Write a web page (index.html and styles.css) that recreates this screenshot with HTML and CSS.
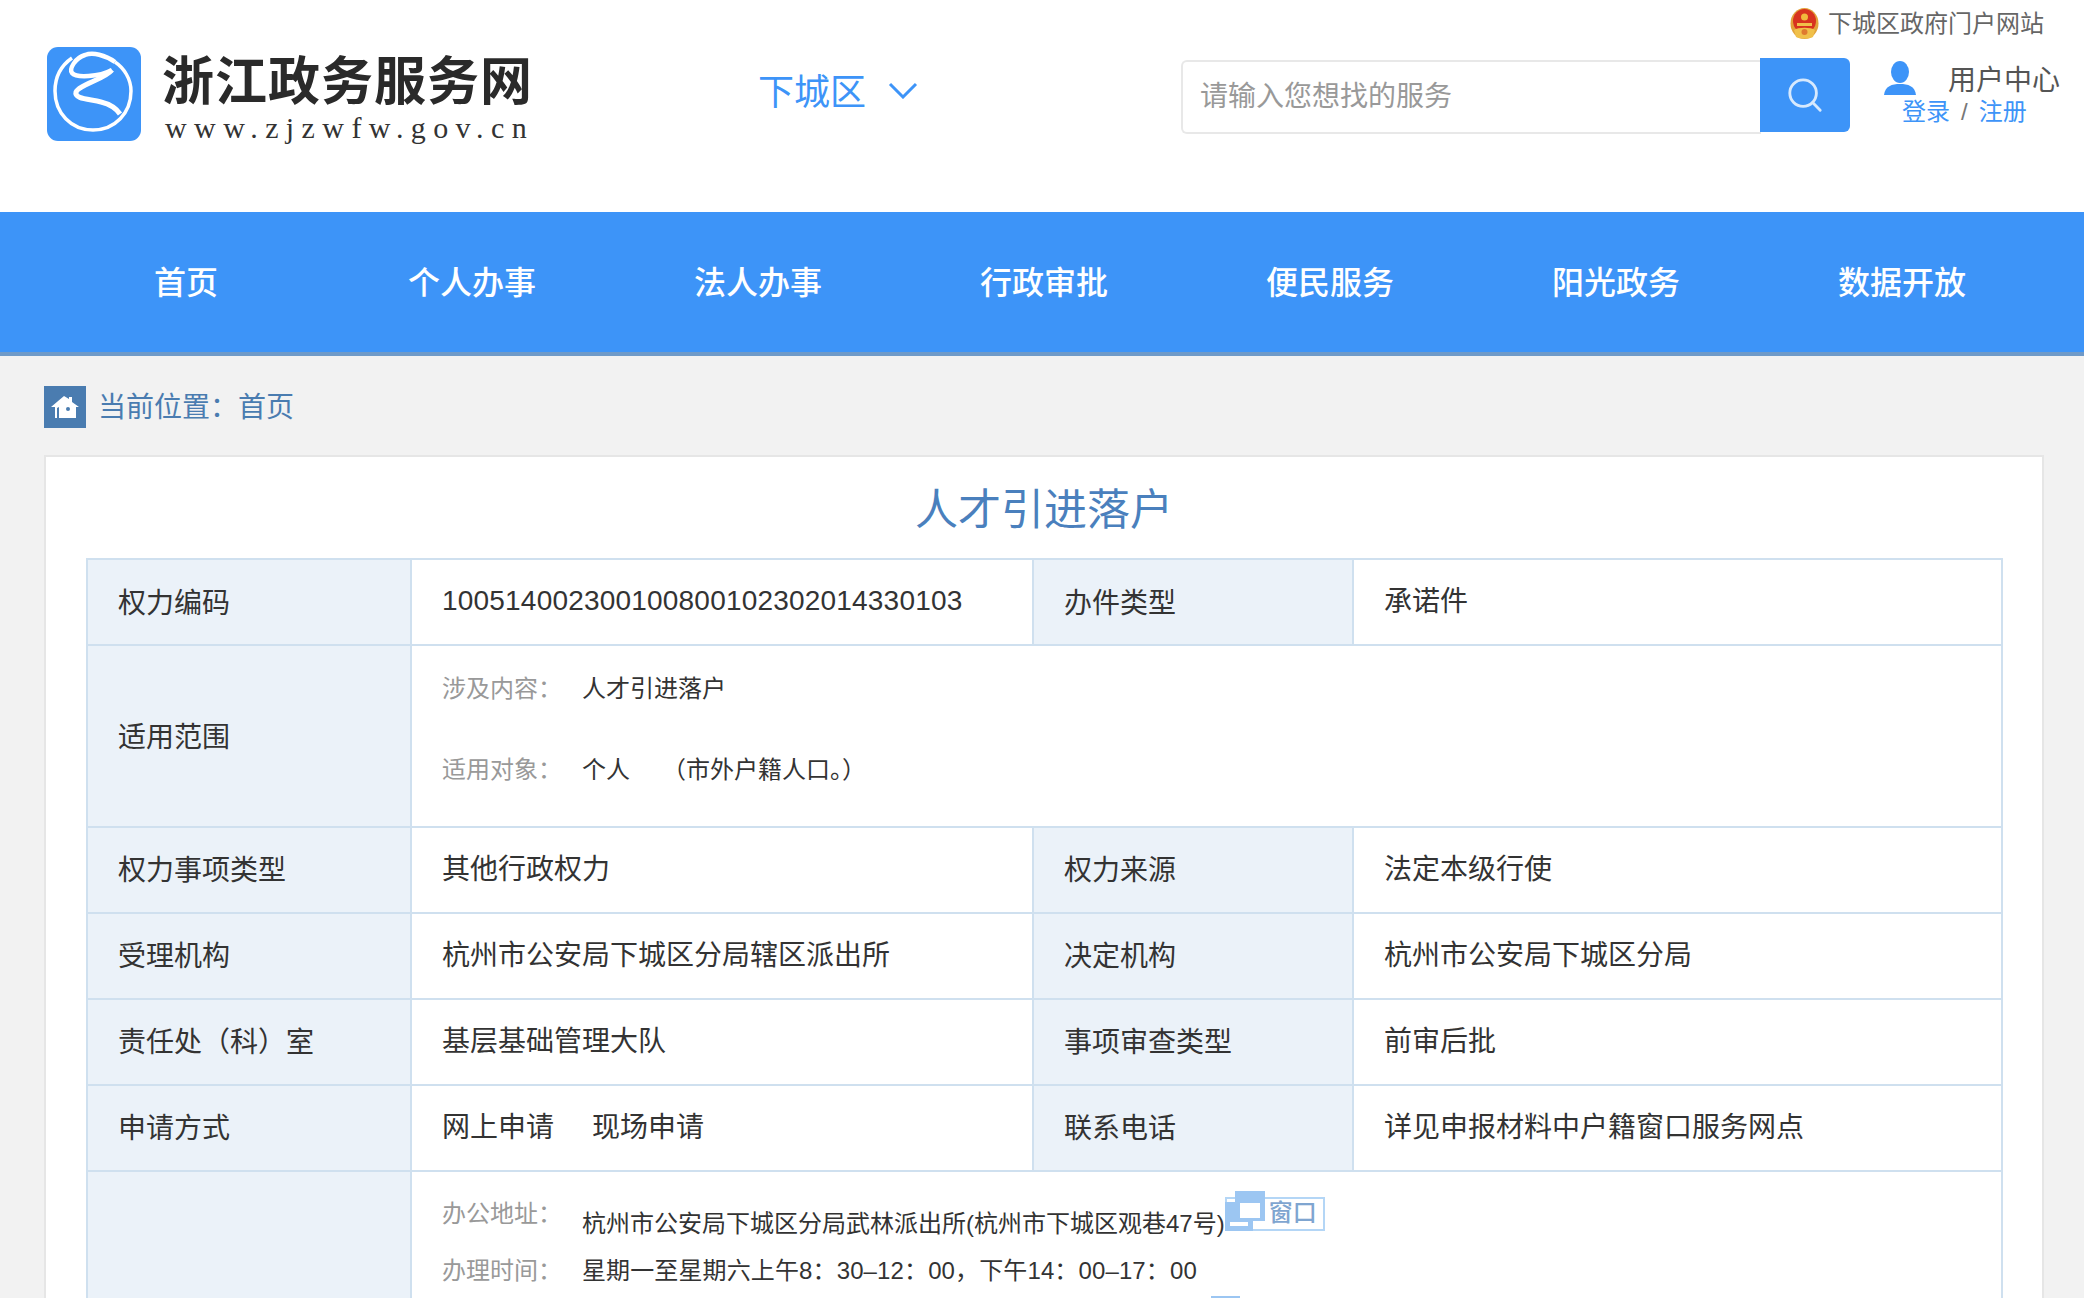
FILE: index.html
```html
<!DOCTYPE html>
<html lang="zh-CN">
<head>
<meta charset="utf-8">
<title>人才引进落户</title>
<link rel="stylesheet" href="styles.css">
</head>
<body>
<header class="header">
  <a class="logo">
    <svg class="logo-mark" viewBox="0 0 94 94">
      <rect width="94" height="94" rx="11" fill="#3d94f8"/>
      <path d="M25 11C12 20 8 33 8 44C8 66 24 83 46 83C68 83 84 66 84 44C84 32 77 21 68 15" fill="none" stroke="#fff" stroke-width="3.5"/>
      <path d="M68 15C58 8 46 5 38 8C28 11 22 22 25 26C29 31 52 30 65 23" fill="none" stroke="#fff" stroke-width="4.5"/>
      <path d="M65 23C58 32 32 38 29 45C27 52 42 52 54 55C62 57 69 61 73 67" fill="none" stroke="#fff" stroke-width="5"/>
    </svg>
    <span class="logo-text">
      <span class="logo-title">浙江政务服务网</span>
      <span class="logo-url">www.zjzwfw.gov.cn</span>
    </span>
  </a>
  <div class="region">
    <span>下城区</span>
    <svg class="chevron" viewBox="0 0 30 17"><path d="M2 2L15 15L28 2" fill="none" stroke="#3d94f8" stroke-width="3"/></svg>
  </div>
  <div class="search">
    <div class="search-input">请输入您想找的服务</div>
    <button class="search-btn">
      <svg viewBox="0 0 40 40" class="search-icon"><circle cx="18" cy="18" r="14" fill="none" stroke="#d7e9fd" stroke-width="3"/><path d="M28 28L36 36" stroke="#d7e9fd" stroke-width="3" stroke-linecap="round"/></svg>
    </button>
  </div>
  <div class="top-right">
    <div class="portal">
      <svg class="emblem" viewBox="0 0 29 31">
        <ellipse cx="14.5" cy="15.5" rx="14" ry="15.5" fill="#e2a23a"/>
        <ellipse cx="14.5" cy="13" rx="11.5" ry="12" fill="#d8331f"/>
        <circle cx="14.5" cy="9" r="3.5" fill="#f1b83c"/>
        <rect x="7" y="15" width="15" height="3" fill="#f0c04a"/>
        <path d="M4 22C8 19 21 19 25 22L23 29C19 31 10 31 6 29Z" fill="#f0c04a"/>
        <circle cx="14.5" cy="24" r="3" fill="#df7a2e"/>
      </svg>
      <span class="portal-text">下城区政府门户网站</span>
    </div>
    <div class="user">
      <div class="user-top">
        <svg class="user-icon" viewBox="0 0 32 34"><ellipse cx="16" cy="11" rx="9" ry="11" fill="#3d94f8"/><path d="M0 34C1 25 8 23 16 23C24 23 31 25 32 34Z" fill="#3d94f8"/></svg>
        <span>用户中心</span>
      </div>
      <div class="user-links"><a>登录</a><i>/</i><a>注册</a></div>
    </div>
  </div>
</header>
<nav class="nav">
  <div class="nav-inner">
    <a>首页</a><a>个人办事</a><a>法人办事</a><a>行政审批</a><a>便民服务</a><a>阳光政务</a><a>数据开放</a>
  </div>
</nav>
<main class="main">
  <div class="crumb">
    <span class="crumb-icon">
      <svg viewBox="0 0 28 28"><path d="M13 3L18 6V4H21V9L28 14H25V25H8V14L6 15V25H4V14H0Z" fill="#fff"/><circle cx="17" cy="16" r="2" fill="#4a7cb0"/></svg>
    </span>
    <span class="crumb-text">当前位置：首页</span>
  </div>
  <section class="card">
    <h1 class="card-title">人才引进落户</h1>
    <table class="info">
      <colgroup><col class="c1"><col class="c2"><col class="c3"><col class="c4"></colgroup>
      <tr class="r-std"><th class="th-first">权力编码</th><td class="num">100514002300100800102302014330103</td><th class="th-first">办件类型</th><td>承诺件</td></tr>
      <tr class="r-scope"><th class="th-first">适用范围</th><td colspan="3">
        <div class="pair first"><span class="lab">涉及内容：</span><span class="val">人才引进落户</span></div>
        <div class="pair"><span class="lab">适用对象：</span><span class="val">个人　<span class="sp-small"></span>（市外户籍人口。）</span></div>
      </td></tr>
      <tr class="r-std"><th>权力事项类型</th><td>其他行政权力</td><th>权力来源</th><td>法定本级行使</td></tr>
      <tr class="r-std"><th>受理机构</th><td>杭州市公安局下城区分局辖区派出所</td><th>决定机构</th><td>杭州市公安局下城区分局</td></tr>
      <tr class="r-std"><th>责任处（科）室</th><td>基层基础管理大队</td><th>事项审查类型</th><td>前审后批</td></tr>
      <tr class="r-std"><th>申请方式</th><td>网上申请<span class="sp"></span>现场申请</td><th>联系电话</th><td>详见申报材料中户籍窗口服务网点</td></tr>
      <tr class="r-last"><th></th><td colspan="3">
        <div class="addr">
          <span class="lab">办公地址：</span><span class="val addr-val">杭州市公安局下城区分局武林派出所(杭州市下城区观巷47号)</span>
          <span class="win">
            <svg class="win-icon" viewBox="0 0 40 40">
              <rect x="10" width="30" height="30" fill="#9cc6f2"/>
              <rect y="11" width="28" height="29" fill="#9cc6f2"/>
              <rect x="15" y="12" width="20" height="15" fill="#fff"/>
              <rect x="5" y="31" width="18" height="4" fill="#fff"/>
            </svg>
            <span class="win-text">窗口</span>
          </span>
        </div>
        <div class="time"><span class="lab">办理时间：</span><span class="val time-val">星期一至星期六上午8：30–12：00，下午14：00–17：00</span></div>
        <div class="more"><span class="more-box"></span></div>
      </td></tr>
    </table>
  </section>
</main>
</body>
</html>
```
FILE: styles.css
```css
* { box-sizing: border-box; }
html, body { margin: 0; height: 1298px; overflow: hidden; }
body { background: #f2f2f2; font-family: "Liberation Sans", "Noto Sans CJK SC", sans-serif; color: #333; }

.header { height: 212px; background: #fff; display: flex; position: relative; padding-left: 47px; }
.logo { display: flex; width: 711px; padding-top: 47px; align-items: flex-start; }
.logo-mark { width: 94px; height: 94px; flex: none; }
.logo-text { display: flex; flex-direction: column; margin-left: 21px; }
.logo-title { font-size: 52px; line-height: 54px; font-weight: 700; color: #2a2a2a; white-space: nowrap; margin-top: 8px; letter-spacing: 1px; }
.logo-url { font-family: "Liberation Serif", serif; font-size: 30px; line-height: 32px; letter-spacing: 7.4px; color: #333; margin-top: 3px; margin-left: 3px; white-space: nowrap; }

.region { width: 423px; display: flex; align-items: center; height: 178px; font-size: 36px; color: #3d94f8; }
.chevron { width: 30px; height: 17px; margin-left: 22px; margin-top: 2px; }

.search { display: flex; align-items: center; height: 190px; width: 669px; flex: none; }
.search-input { width: 581px; height: 74px; margin-top: 4px; border: 2px solid #e8e8e8; border-right: 0; border-radius: 6px 0 0 6px; font-size: 28px; line-height: 70px; padding-left: 17px; color: #999; }
.search-btn { width: 90px; height: 74px; margin-left: -1px; background: #3d94f8; border: 0; border-radius: 0 6px 6px 0; padding: 0; display: flex; align-items: center; justify-content: center; }
.search-icon { width: 38px; height: 38px; }

.top-right { display: flex; flex-direction: column; flex: 1; }
.portal { position: absolute; top: 8px; left: 1790px; display: flex; align-items: flex-start; font-size: 24px; color: #666; white-space: nowrap; }
.portal-text { line-height: 32px; }
.emblem { width: 29px; height: 31px; margin-right: 9px; }
.user { position: absolute; top: 58px; left: 1884px; width: 190px; }
.user-top { display: flex; align-items: center; font-size: 28px; color: #555; height: 40px; white-space: nowrap; }
.user-icon { width: 32px; height: 34px; margin-right: 32px; }
.user-links { font-size: 24px; line-height: 30px; margin-top: -1px; margin-left: 18px; color: #3d94f8; white-space: nowrap; }
.user-links i { font-style: normal; color: #777; margin: 0 11px; }

.nav { height: 144px; background: #3d94f8; border-bottom: 4px solid #6f9ac8; }
.nav-inner { width: 2006px; margin-left: 39px; padding-left: 4px; display: grid; grid-template-columns: repeat(7, 1fr); }
.nav-inner a { height: 140px; line-height: 137px; text-align: center; font-size: 32px; color: #fff; font-weight: 500; font-family: "Noto Sans CJK SC", sans-serif; }

.main { padding: 30px 40px 0 44px; }
.crumb { display: flex; align-items: center; height: 42px; font-size: 28px; color: #4a7cb0; }
.crumb-text { padding-bottom: 5px; }
.crumb-icon { width: 42px; height: 42px; background: #4a7cb0; margin-right: 12px; display: flex; align-items: center; justify-content: center; }
.crumb-icon svg { width: 28px; height: 28px; }

.card { margin-top: 27px; background: #fff; border: 2px solid #e6e6e6; padding: 0 40px; height: 1000px; }
.card-title { margin: 0; height: 101px; line-height: 107px; text-align: center; font-size: 43px; font-weight: 400; color: #4a80bd; }

.info { width: 1915px; border-collapse: collapse; table-layout: fixed; font-size: 28px; color: #333; }
.c1 { width: 324px; } .c2 { width: 622px; } .c3 { width: 320px; } .c4 { width: 649px; }
.info th, .info td { border: 2px solid #cfe0ef; padding: 0 0 6px 30px; text-align: left; font-weight: 400; vertical-align: middle; }
.info th { background: #ebf2f9; padding-bottom: 4px; }
.info th.th-first { padding-bottom: 2px; }
.info td.num { padding-bottom: 3px; letter-spacing: 0.2px; }
.r-std { height: 86px; }
.r-scope { height: 182px; }
.info .r-scope td { padding-bottom: 15px; }
.r-last { height: 300px; }
.sp { display: inline-block; width: 38px; }
.sp-small { display: inline-block; width: 8px; }

.lab { color: #999; font-size: 24px; display: inline-block; width: 140px; flex: none; }
.val { color: #333; font-size: 24px; }
.pair { height: 36px; line-height: 36px; white-space: nowrap; }
.pair.first { margin-bottom: 45px; }
.info .r-last td { vertical-align: top; padding-bottom: 0; }
.addr { height: 36px; margin-top: 24px; line-height: 36px; white-space: nowrap; display: flex; }
.addr-val { margin-top: 10px; }
.win { position: relative; display: block; width: 100px; height: 34px; margin-top: 1px; border: 2px solid #b4d6f6; }
.win-icon { position: absolute; left: -2px; top: -8px; width: 40px; height: 40px; }
.win-text { position: absolute; left: 42px; top: -3px; line-height: 34px; font-size: 24px; color: #7fa5d0; font-weight: 500; }
.time { margin-top: 20px; height: 36px; line-height: 36px; white-space: nowrap; }
.time-val { letter-spacing: 0.12px; }
.more { margin-top: 8px; padding-left: 769px; }
.more-box { display: block; width: 29px; height: 6px; background: #9cc6f2; }
```
